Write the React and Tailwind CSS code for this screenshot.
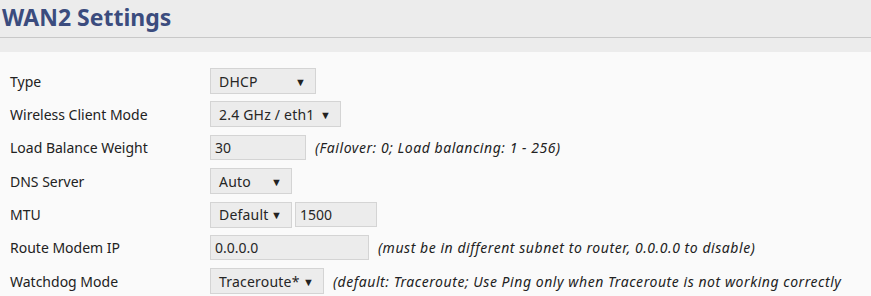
const rows = [
  { label: "Type", control: <Select value="DHCP" w="w-[106px]" /> },
  { label: "Wireless Client Mode", control: <Select value="2.4 GHz / eth1" w="w-[131px]" /> },
  {
    label: "Load Balance Weight",
    control: <Input value="30" w="w-[96px]" />,
    note: "(Failover: 0; Load balancing: 1 - 256)",
  },
  { label: "DNS Server", control: <Select value="Auto" w="w-[82px]" /> },
  {
    label: "MTU",
    control: (
      <div className="flex gap-[3px]">
        <Select value="Default" w="w-[82px]" />
        <Input value="1500" w="w-[82px]" />
      </div>
    ),
  },
  {
    label: "Route Modem IP",
    control: <Input value="0.0.0.0" w="w-[159px]" />,
    note: "(must be in different subnet to router, 0.0.0.0 to disable)",
  },
  {
    label: "Watchdog Mode",
    control: <Select value="Traceroute*" w="w-[114px]" />,
    note: "(default: Traceroute; Use Ping only when Traceroute is not working correctly",
  },
];

function Select({ value, w }) {
  return (
    <div
      className={`${w} flex h-[26px] items-center justify-between border border-[#d4d4d4] bg-[#ececec] pl-[8px] pr-[9px] text-[14px] text-[#262626]`}
    >
      <span className="tracking-[0.2px]">{value}</span>
      <span className="text-[11px] leading-none text-[#222]">▼</span>
    </div>
  );
}

function Input({ value, w }) {
  return (
    <div
      className={`${w} flex h-[25px] items-center border border-[#d4d4d4] bg-[#ececec] px-[4px] text-[14px] text-[#262626]`}
    >
      {value}
    </div>
  );
}

export default function App() {
  return (
    <div
      className="h-[296px] w-[871px] overflow-hidden bg-[#fafafa] text-[#222]"
      style={{ fontFamily: "'Noto Sans', 'Open Sans', sans-serif" }}
    >
      <div className="bg-[#ececec] pb-[14px]">
        <h1 className="h-[38px] border-b border-[#c8c8c8] pl-[2px] pt-[2px] text-[23px] font-bold leading-[30px] text-[#3b4c7e]">
          WAN2 Settings
        </h1>
      </div>
      <div className="flex flex-col gap-y-[7.4px] pt-[16px]">
        {rows.map((r) => (
          <div key={r.label} className="flex h-[26px] items-center">
            <div className="w-[210px] pl-[10px] text-[14px]">{r.label}</div>
            {r.control}
            {r.note && (
              <div className="ml-[9px] whitespace-nowrap text-[14px] italic tracking-[0.55px]">
                {r.note}
              </div>
            )}
          </div>
        ))}
      </div>
    </div>
  );
}
